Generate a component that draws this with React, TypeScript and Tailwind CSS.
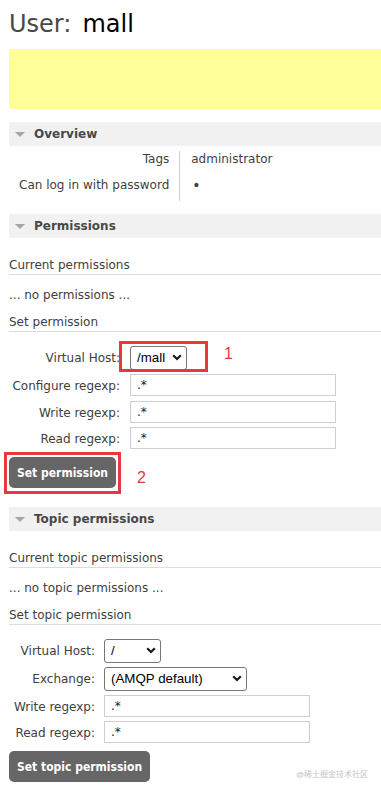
import React from "react";

const body = "font-['DejaVu_Sans',Verdana,sans-serif]";
const ctl = "font-['Liberation_Sans',Arial,sans-serif]";

function Chevron() {
  return (
    <svg width="10" height="7" viewBox="0 0 10 7" aria-hidden="true">
      <path d="M1.2 1.2 L5 5 L8.8 1.2" fill="none" stroke="#1a1a1a" strokeWidth="2.2" />
    </svg>
  );
}

function SectionHeader({ title }: { title: string }) {
  return (
    <div className="flex h-[24px] items-center bg-[#f1f1f1]">
      <span className="ml-[6px] h-0 w-0 border-x-[5px] border-t-[5px] border-x-transparent border-t-[#a5a5a5]" />
      <span className="ml-[9px] text-[12px] leading-[15px] font-bold text-[#484848]">{title}</span>
    </div>
  );
}

function Select({ value, width }: { value: string; width: string }) {
  return (
    <div
      className={`flex h-[23.5px] items-center justify-between rounded-[3px] border border-[#767676] bg-white pl-[6px] pr-[4px] text-[13.33px] text-black ${ctl} ${width}`}
    >
      <span>{value}</span>
      <Chevron />
    </div>
  );
}

function TextInput() {
  return (
    <input
      readOnly
      value=".*"
      className={`h-[22px] w-[206px] border border-[#cfcfcf] bg-white px-[6px] text-[12px] text-[#222] outline-none ${body}`}
    />
  );
}

function Row({ label, labelW, gap, children }: { label: string; labelW: string; gap: string; children: React.ReactNode }) {
  return (
    <div className={`flex items-start ${gap}`}>
      <div className={`${labelW} shrink-0 pt-[5px] text-right text-[12px] leading-[15px]`}>{label}</div>
      {children}
    </div>
  );
}

function SubHead({ text, first }: { text: string; first?: boolean }) {
  return (
    <div className={`${first ? "mt-[20px]" : "mt-[12px]"} border-b border-[#dcdcdc] pb-[1px] leading-[15px]`}>
      {text}
    </div>
  );
}

function Btn({ children }: { children: React.ReactNode }) {
  return (
    <button className="mt-[8px] h-[31px] w-fit rounded-[5px] bg-[#666] px-[8px] text-[12px] font-bold text-white font-['DejaVu_Sans_Condensed','Liberation_Sans',sans-serif]">
      {children}
    </button>
  );
}

export default function App() {
  return (
    <div className={`relative h-[795px] w-[381px] overflow-hidden bg-white pl-[9px] text-[12px] text-[#404040] ${body}`}>
      <h1 className="pt-[10px] text-[24px] leading-[28px] font-normal text-[#484848]">
        User:<span className="ml-[11px] text-black">mall</span>
      </h1>

      <div className="mt-[11px] h-[60px] rounded-l-[3px] bg-[#ffff99]" />

      {/* overview */}
      <div className="mt-[13px]">
        <SectionHeader title="Overview" />
        <div className="mt-[5px] flex">
          <div className="flex flex-col items-end px-[10px] pt-[1px] leading-[15px]">
            <div className="h-[26px]">Tags</div>
            <div className="h-[23px]">Can log in with password</div>
          </div>
          <div className="flex flex-col border-l border-[#cfcfcf] pl-[11px] pt-[1px] leading-[15px]">
            <div className="h-[26px]">administrator</div>
            <div className="h-[23px] pl-[1px] text-[14px]">•</div>
          </div>
        </div>
      </div>

      {/* permissions */}
      <div className="mt-[13px]">
        <SectionHeader title="Permissions" />
        <SubHead text="Current permissions" first />
        <div className="mt-[13px] leading-[15px]">... no permissions ...</div>
        <SubHead text="Set permission" />
        <div className="mt-[14px] flex flex-col gap-[4.5px]">
          <Row label="Virtual Host:" labelW="w-[111px]" gap="gap-[10px]">
            <div className="relative">
              <Select value="/mall" width="w-[57px]" />
              <div className="absolute left-[-11px] top-[-5px] h-[31px] w-[89px] border-[3px] border-[#e3393f]" />
              <span className={`absolute left-[94px] top-[-1px] text-[16px] leading-[18px] text-[#e3393f] ${ctl}`}>1</span>
            </div>
          </Row>
          <Row label="Configure regexp:" labelW="w-[111px]" gap="gap-[10px]">
            <TextInput />
          </Row>
          <Row label="Write regexp:" labelW="w-[111px]" gap="gap-[10px]">
            <TextInput />
          </Row>
          <Row label="Read regexp:" labelW="w-[111px]" gap="gap-[10px]">
            <TextInput />
          </Row>
        </div>
        <div className="relative w-fit">
          <Btn>Set permission</Btn>
          <div className="absolute left-[-5px] top-[3px] h-[42px] w-[117px] border-[3px] border-[#e3393f]" />
          <span className={`absolute left-[128px] top-[20px] text-[16px] leading-[18px] text-[#e3393f] ${ctl}`}>2</span>
        </div>
      </div>

      {/* topic permissions */}
      <div className="mt-[19px]">
        <SectionHeader title="Topic permissions" />
        <SubHead text="Current topic permissions" first />
        <div className="mt-[13px] leading-[15px]">... no topic permissions ...</div>
        <SubHead text="Set topic permission" />
        <div className="mt-[14px] flex flex-col gap-[4px]">
          <Row label="Virtual Host:" labelW="w-[86px]" gap="gap-[9px]">
            <Select value="/" width="w-[57px]" />
          </Row>
          <Row label="Exchange:" labelW="w-[86px]" gap="gap-[9px]">
            <Select value="(AMQP default)" width="w-[143px] h-[24.5px]" />
          </Row>
          <Row label="Write regexp:" labelW="w-[86px]" gap="gap-[9px]">
            <TextInput />
          </Row>
          <Row label="Read regexp:" labelW="w-[86px]" gap="gap-[9px]">
            <TextInput />
          </Row>
        </div>
        <Btn>Set topic permission</Btn>
      </div>

      <span className="absolute left-[296px] top-[770px] text-[8px] leading-[10px] text-[#c4c4c4] font-['Liberation_Sans','Noto_Sans_CJK_SC',sans-serif]">
        @稀土掘金技术社区
      </span>
    </div>
  );
}
